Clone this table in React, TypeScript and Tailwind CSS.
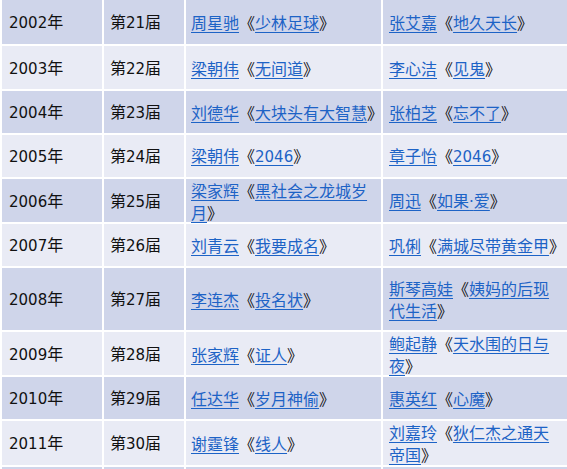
import React from "react";

type Pair = { name: string; film: string[] };
type Row = { year: string; ed: string; h: string; actor: Pair; actress: Pair };

const rows: Row[] = [
  { year: "2002年", ed: "第21届", h: "h-[44px]", actor: { name: "周星驰", film: ["少林足球"] }, actress: { name: "张艾嘉", film: ["地久天长"] } },
  { year: "2003年", ed: "第22届", h: "h-[43px]", actor: { name: "梁朝伟", film: ["无间道"] }, actress: { name: "李心洁", film: ["见鬼"] } },
  { year: "2004年", ed: "第23届", h: "h-[42px]", actor: { name: "刘德华", film: ["大块头有大智慧"] }, actress: { name: "张柏芝", film: ["忘不了"] } },
  { year: "2005年", ed: "第24届", h: "h-[42px]", actor: { name: "梁朝伟", film: ["2046"] }, actress: { name: "章子怡", film: ["2046"] } },
  { year: "2006年", ed: "第25届", h: "h-[43px]", actor: { name: "梁家辉", film: ["黑社会之龙城岁", "月"] }, actress: { name: "周迅", film: ["如果·爱"] } },
  { year: "2007年", ed: "第26届", h: "h-[42px]", actor: { name: "刘青云", film: ["我要成名"] }, actress: { name: "巩俐", film: ["满城尽带黄金甲"] } },
  { year: "2008年", ed: "第27届", h: "h-[62px]", actor: { name: "李连杰", film: ["投名状"] }, actress: { name: "斯琴高娃", film: ["姨妈的后现", "代生活"] } },
  { year: "2009年", ed: "第28届", h: "h-[43px]", actor: { name: "张家辉", film: ["证人"] }, actress: { name: "鲍起静", film: ["天水围的日与", "夜"] } },
  { year: "2010年", ed: "第29届", h: "h-[42px]", actor: { name: "任达华", film: ["岁月神偷"] }, actress: { name: "惠英红", film: ["心魔"] } },
  { year: "2011年", ed: "第30届", h: "h-[44px]", actor: { name: "谢霆锋", film: ["线人"] }, actress: { name: "刘嘉玲", film: ["狄仁杰之通天", "帝国"] } },
  { year: "", ed: "", h: "h-[44px]", actor: { name: "", film: [] }, actress: { name: "", film: [] } },
];

const latin = { fontFamily: '"DejaVu Sans", sans-serif' };

function T({ s }: { s: string }) {
  const parts = s.split(/([\d·]+)/);
  return (
    <>
      {parts.map((p, i) =>
        /^[\d·]+$/.test(p) ? (
          <span key={i} className="text-[15px]" style={latin}>
            {p}
          </span>
        ) : (
          <React.Fragment key={i}>{p}</React.Fragment>
        )
      )}
    </>
  );
}

function Link({ children }: { children: React.ReactNode }) {
  return <a className="text-[#1d63c6] underline decoration-[#1d63c6] underline-offset-[3px]">{children}</a>;
}

function Work({ p }: { p: Pair }) {
  if (!p.name) return null;
  return (
    <span className="whitespace-nowrap">
      <Link>{p.name}</Link>
      《
      <Link>
        {p.film.map((f, i) => (
          <React.Fragment key={i}>
            {i > 0 && <br />}
            <T s={f} />
          </React.Fragment>
        ))}
      </Link>
      》
    </span>
  );
}

export default function App() {
  return (
    <div
      className="w-[567px] h-[469px] overflow-hidden bg-white pl-[2px] text-[16px] leading-[22px] text-[#111]"
      style={{ fontFamily: '"Noto Sans CJK SC", sans-serif' }}
    >
      <div className="grid grid-cols-[100px_80px_195px_190px] gap-[2px]">
        {rows.map((r, i) => {
          const bg = i % 2 === 0 ? "bg-[#cfd5ea]" : "bg-[#e9ebf5]";
          return (
            <React.Fragment key={i}>
              <div className={`${bg} ${r.h} flex items-center pl-[7px]`}>
                <span><T s={r.year} /></span>
              </div>
              <div className={`${bg} ${r.h} flex items-center pl-[6px]`}>
                <span><T s={r.ed} /></span>
              </div>
              <div className={`${bg} ${r.h} flex items-center pl-[5px]`}>
                <Work p={r.actor} />
              </div>
              <div className={`${bg} ${r.h} flex items-center pl-[6px]`}>
                <Work p={r.actress} />
              </div>
            </React.Fragment>
          );
        })}
      </div>
    </div>
  );
}
